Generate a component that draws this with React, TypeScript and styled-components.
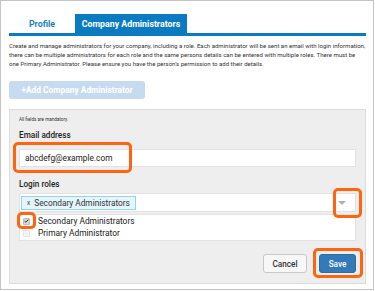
import React from 'react'
import styled, { createGlobalStyle } from 'styled-components'

const Global = createGlobalStyle`
    body {
        margin: 0;
        background: #fff;
        font-family: Roboto, 'Liberation Sans', Arial, sans-serif;
        color: #333;
    }
`

const Frame = styled.div`
    position: relative;
    box-sizing: border-box;
    width: 374px;
    height: 290px;
    border: 1px solid #c4c4c4;
    padding: 13px 7px 0 8px;
    overflow: hidden;
`

const Tabs = styled.div`
    display: flex;
    border-bottom: 3px solid #0b7bc1;
`

const Tab = styled.div<{ active?: boolean }>`
    width: ${p => (p.active ? '112px' : '66px')};
    height: 19px;
    display: flex;
    align-items: center;
    justify-content: center;
    font-size: 8.8px;
    font-weight: 700;
    color: ${p => (p.active ? '#fff' : '#1a7fc4')};
    background: ${p => (p.active ? '#0b7bc1' : 'transparent')};
`

const Intro = styled.p`
    margin: 5px 0 0;
    font-size: 6.05px;
    line-height: 9px;
    color: #333;
`

const AddButton = styled.div`
    margin-top: 13px;
    width: 136px;
    height: 18px;
    border-radius: 3px;
    background: #c6dbef;
    color: #fff;
    font-size: 8.4px;
    font-weight: 700;
    display: flex;
    align-items: center;
    justify-content: center;
`

const Panel = styled.div`
    margin-top: 10px;
    box-sizing: border-box;
    height: 175px;
    background: #eeeeee;
    border: 1px solid #dcdcdc;
    padding: 6px 9px 0 9px;
    display: flex;
    flex-direction: column;
`

const Note = styled.div`
    font-size: 4.6px;
    line-height: 8px;
    color: #333;
`

const Label = styled.div<{ top: number }>`
    margin-top: ${p => p.top}px;
    font-size: 8.2px;
    line-height: 12px;
    font-weight: 500;
    color: #222;
`

const Input = styled.div`
    margin-top: 8px;
    box-sizing: border-box;
    height: 18px;
    background: #fff;
    border: 1px solid #e2e2e2;
    padding-left: 5px;
    display: flex;
    align-items: center;
    font-size: 8.3px;
    color: #222;
`

const Select = styled.div`
    margin-top: 3px;
    box-sizing: border-box;
    height: 19px;
    background: #fff;
    border: 1px solid #e2e2e2;
    padding: 0 9px 0 1px;
    display: flex;
    align-items: center;
    justify-content: space-between;
`

const Chip = styled.div`
    box-sizing: border-box;
    width: 115px;
    height: 14px;
    background: #e4f5fc;
    border: 1px solid #93d3ec;
    display: flex;
    align-items: center;
    gap: 4px;
    padding-left: 5px;
    white-space: nowrap;
    font-size: 8.3px;
    color: #333;
`

const ChipX = styled.span`
    font-size: 6.5px;
    color: #444;
`

const Arrow = styled.div`
    width: 0;
    height: 0;
    border-left: 4.5px solid transparent;
    border-right: 4.5px solid transparent;
    border-top: 4px solid #b0b0b0;
`

const List = styled.div`
    margin-top: 2px;
    box-sizing: border-box;
    height: 27px;
    background: #fff;
    border: 1px solid #e2e2e2;
    padding: 0 0 0 3px;
    display: flex;
    flex-direction: column;
`

const Option = styled.div`
    display: flex;
    align-items: center;
    gap: 8px;
    height: 12px;
    font-size: 8.4px;
    color: #222;
`

const Check = styled.span<{ checked?: boolean }>`
    box-sizing: border-box;
    width: 7px;
    height: 7px;
    border-radius: 1px;
    background: ${p => (p.checked ? '#d6d6d6' : '#f3f3f3')};
    border: 1px solid ${p => (p.checked ? '#bdbdbd' : '#e4e4e4')};
    display: flex;
    align-items: center;
    justify-content: center;
`

const Actions = styled.div`
    margin-top: 13px;
    display: flex;
    justify-content: flex-end;
    gap: 12px;
`

const Button = styled.div<{ primary?: boolean }>`
    box-sizing: border-box;
    height: 19px;
    width: ${p => (p.primary ? '37px' : '44px')};
    border-radius: 3px;
    display: flex;
    align-items: center;
    justify-content: center;
    font-size: 8.2px;
    font-weight: 500;
    color: ${p => (p.primary ? '#fff' : '#333')};
    background: ${p => (p.primary ? '#347ab8' : '#f7f7f7')};
    border: 1px solid ${p => (p.primary ? '#2e6da4' : '#c9c9c9')};
`

const Highlight = styled.div`
    position: absolute;
    box-sizing: border-box;
    border: 3px solid #ff6410;
    border-radius: 5px;
    pointer-events: none;
`

const marks = [
    { x: 12, y: 141, w: 119, h: 31 },
    { x: 332, y: 187, w: 29, h: 30 },
    { x: 16, y: 211, w: 19, h: 17 },
    { x: 312, y: 247, w: 50, h: 30 },
]

export default function App() {
    return (
        <>
            <Global />
            <Frame>
                <Tabs>
                    <Tab>Profile</Tab>
                    <Tab active>Company Administrators</Tab>
                </Tabs>
                <Intro>
                    Create and manage administrators for your company, including a role. Each administrator will be
                    sent an email with login information, there can be multiple administrators for each role and the
                    same persons details can be entered with multiple roles. There must be one Primary Administrator.
                    Please ensure you have the person’s permission to add their details.
                </Intro>
                <AddButton>+Add Company Administrator</AddButton>
                <Panel>
                    <Note>All fields are mandatory.</Note>
                    <Label top={5}>Email address</Label>
                    <Input>abcdefg@example.com</Input>
                    <Label top={11}>Login roles</Label>
                    <Select>
                        <Chip>
                            <ChipX>x</ChipX>
                            Secondary Administrators
                        </Chip>
                        <Arrow />
                    </Select>
                    <List>
                        <Option>
                            <Check checked>
                                <svg width="5" height="4" viewBox="0 0 5 4">
                                    <path d="M0.6 2 L1.9 3.2 L4.4 0.6" stroke="#333" strokeWidth="1" fill="none" />
                                </svg>
                            </Check>
                            Secondary Administrators
                        </Option>
                        <Option>
                            <Check />
                            Primary Administrator
                        </Option>
                    </List>
                    <Actions>
                        <Button>Cancel</Button>
                        <Button primary>Save</Button>
                    </Actions>
                </Panel>
                {marks.map((m, i) => (
                    <Highlight key={i} style={{ left: m.x, top: m.y, width: m.w, height: m.h }} />
                ))}
            </Frame>
        </>
    )
}
